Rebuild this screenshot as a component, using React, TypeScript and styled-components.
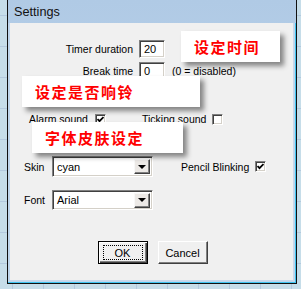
import React from "react";
import styled, { createGlobalStyle } from "styled-components";

const GlobalStyle = createGlobalStyle`
  html, body {
    margin: 0;
    padding: 0;
  }

  body {
    font-family: "Liberation Sans", Arial, sans-serif;
    font-size: 10.5px;
    color: #000;
  }
`;

const Desktop = styled.div`
  width: 301px;
  height: 289px;
  overflow: hidden;
  background-color: #c6dde9;
  background-image:
    repeating-linear-gradient(90deg, transparent 0 12px, #b3c9de 12px 13px, transparent 13px 31px),
    repeating-linear-gradient(0deg, transparent 0 25px, #b3c9de 25px 26px, transparent 26px 31px);
`;

const Window = styled.div`
  margin-left: 7px;
  width: 288px;
  height: 283px;
  display: flex;
  flex-direction: column;
  border: 1px solid #111;
  border-top: none;
  background: linear-gradient(180deg, #b0cae5 0%, #c2d8ee 100%);
`;

const TitleBar = styled.div`
  height: 23px;
  display: flex;
  align-items: center;
  padding-left: 6px;
  font-size: 12.7px;
  color: #111;
`;

const Frame = styled.div`
  flex: 1;
  display: flex;
  padding: 0 1px 1px 2px;
  border-right: 1px solid #3fc4f1;
  border-bottom: 1px solid #3fc4f1;
  background: #c0d6ec;
`;

const Client = styled.div`
  position: relative;
  flex: 1;
  display: flex;
  flex-direction: column;
  background: #f0f0f0;
  border-right: 1px solid #c9d8ea;
  border-bottom: 1px solid #c9d8ea;
`;

const Row = styled.div<{ $top: number; $h: number; $left?: number }>`
  display: flex;
  align-items: center;
  margin-top: ${(p) => p.$top}px;
  height: ${(p) => p.$h}px;
  padding-left: ${(p) => p.$left ?? 0}px;
`;

const RightLabel = styled.span`
  width: 123px;
  text-align: right;
  margin-right: 6px;
  white-space: nowrap;
`;

const Label = styled.span<{ $w?: number; $gap?: number; $ml?: number }>`
  white-space: nowrap;
  ${(p) => (p.$w ? `width: ${p.$w}px;` : "")}
  margin-right: ${(p) => p.$gap ?? 0}px;
  margin-left: ${(p) => p.$ml ?? 0}px;
`;

const TextInput = styled.div`
  box-sizing: border-box;
  width: 26px;
  height: 18px;
  padding: 2px 0 0 4px;
  background: #fff;
  border-top: 1px solid #808080;
  border-left: 1px solid #808080;
  border-right: 1px solid #fff;
  border-bottom: 1px solid #fff;
  box-shadow: inset 1px 1px 0 #404040, inset -1px -1px 0 #d4d0c8;
  font-size: 11px;
`;

const Hint = styled.span`
  margin-left: 7px;
`;

const CheckBox = styled.span`
  box-sizing: border-box;
  width: 11px;
  height: 11px;
  display: inline-flex;
  align-items: center;
  justify-content: center;
  background: #fff;
  border-top: 1px solid #808080;
  border-left: 1px solid #808080;
  border-right: 1px solid #fff;
  border-bottom: 1px solid #fff;
  box-shadow: inset 1px 1px 0 #404040, inset -1px -1px 0 #d4d0c8;
`;

const Select = styled.div<{ $h: number }>`
  box-sizing: border-box;
  width: 101px;
  height: ${(p) => p.$h}px;
  display: flex;
  align-items: center;
  justify-content: space-between;
  padding: 0 2px 0 4px;
  background: #fff;
  border-top: 1px solid #808080;
  border-left: 1px solid #808080;
  border-right: 1px solid #fff;
  border-bottom: 1px solid #fff;
  box-shadow: inset 1px 1px 0 #404040, inset -1px -1px 0 #d4d0c8;
  font-size: 11px;
`;

const ArrowButton = styled.span`
  box-sizing: border-box;
  width: 16px;
  height: 15px;
  display: flex;
  align-items: center;
  justify-content: center;
  background: #ece9e6;
  border-top: 1px solid #f8f8f8;
  border-left: 1px solid #f8f8f8;
  border-right: 1px solid #404040;
  border-bottom: 1px solid #404040;
  box-shadow: inset -1px -1px 0 #808080;

  &::after {
    content: "";
    border-left: 4px solid transparent;
    border-right: 4px solid transparent;
    border-top: 4px solid #000;
  }
`;

const ButtonRow = styled.div`
  display: flex;
  justify-content: center;
  gap: 10px;
  margin-top: 31px;
  padding-left: 2px;
`;

const Button = styled.div<{ $default?: boolean }>`
  box-sizing: border-box;
  width: 50px;
  height: 23px;
  display: flex;
  align-items: center;
  justify-content: center;
  background: #f0f0f0;
  font-size: 11px;
  border: 1px solid;
  border-color: ${(p) => (p.$default ? "#000" : "#fff #404040 #404040 #fff")};
  box-shadow: ${(p) =>
    p.$default
      ? "inset 1px 1px 0 #fff, inset -1px -1px 0 #404040, inset -2px -2px 0 #808080"
      : "inset -1px -1px 0 #808080"};
`;

const FocusRect = styled.span`
  display: flex;
  align-items: center;
  justify-content: center;
  width: 38px;
  height: 13px;
  border: 1px dotted #000;
`;

const Callout = styled.div<{ $x: number; $y: number; $w: number }>`
  position: absolute;
  left: ${(p) => p.$x}px;
  top: ${(p) => p.$y}px;
  width: ${(p) => p.$w}px;
  height: 31px;
  box-sizing: border-box;
  display: flex;
  align-items: center;
  padding-left: 13px;
  background: #fff;
  box-shadow: 4px 4px 5px rgba(0, 0, 0, 0.45);
  color: #ff0000;
  font-family: "Noto Sans CJK SC", "Noto Sans", sans-serif;
  font-size: 15px;
  font-weight: 700;
  letter-spacing: 1.5px;
`;

const Check = () => (
  <CheckBox>
    <svg width="7" height="7" viewBox="0 0 7 7">
      <polyline points="0.5,3 2.5,5.2 6.5,1" fill="none" stroke="#000" strokeWidth="1.8" />
    </svg>
  </CheckBox>
);

export default function App() {
  return (
    <>
      <GlobalStyle />
      <Desktop>
        <Window>
          <TitleBar>Settings</TitleBar>
          <Frame>
            <Client>
              <Row $top={17} $h={18}>
                <RightLabel>Timer duration</RightLabel>
                <TextInput>20</TextInput>
              </Row>
              <Row $top={4} $h={18}>
                <RightLabel>Break time</RightLabel>
                <TextInput>0</TextInput>
                <Hint>(0 = disabled)</Hint>
              </Row>
              <Row $top={33} $h={12} $left={19}>
                <Label $w={66}>Alarm sound</Label>
                <Check />
                <Label $ml={36} $gap={6}>Ticking sound</Label>
                <CheckBox />
              </Row>
              <Row $top={31} $h={21} $left={14}>
                <Label $w={28}>Skin</Label>
                <Select $h={21}>
                  <span>cyan</span>
                  <ArrowButton />
                </Select>
                <Label $ml={28} $gap={6}>Pencil Blinking</Label>
                <Check />
              </Row>
              <Row $top={13} $h={20} $left={14}>
                <Label $w={28}>Font</Label>
                <Select $h={20}>
                  <span>Arial</span>
                  <ArrowButton />
                </Select>
              </Row>
              <ButtonRow>
                <Button $default>
                  <FocusRect>OK</FocusRect>
                </Button>
                <Button>Cancel</Button>
              </ButtonRow>

              <Callout $x={171} $y={8} $w={99}>设定时间</Callout>
              <Callout $x={12} $y={53} $w={178}>设定是否响铃</Callout>
              <Callout $x={22} $y={99} $w={151}>字体皮肤设定</Callout>
            </Client>
          </Frame>
        </Window>
      </Desktop>
    </>
  );
}
